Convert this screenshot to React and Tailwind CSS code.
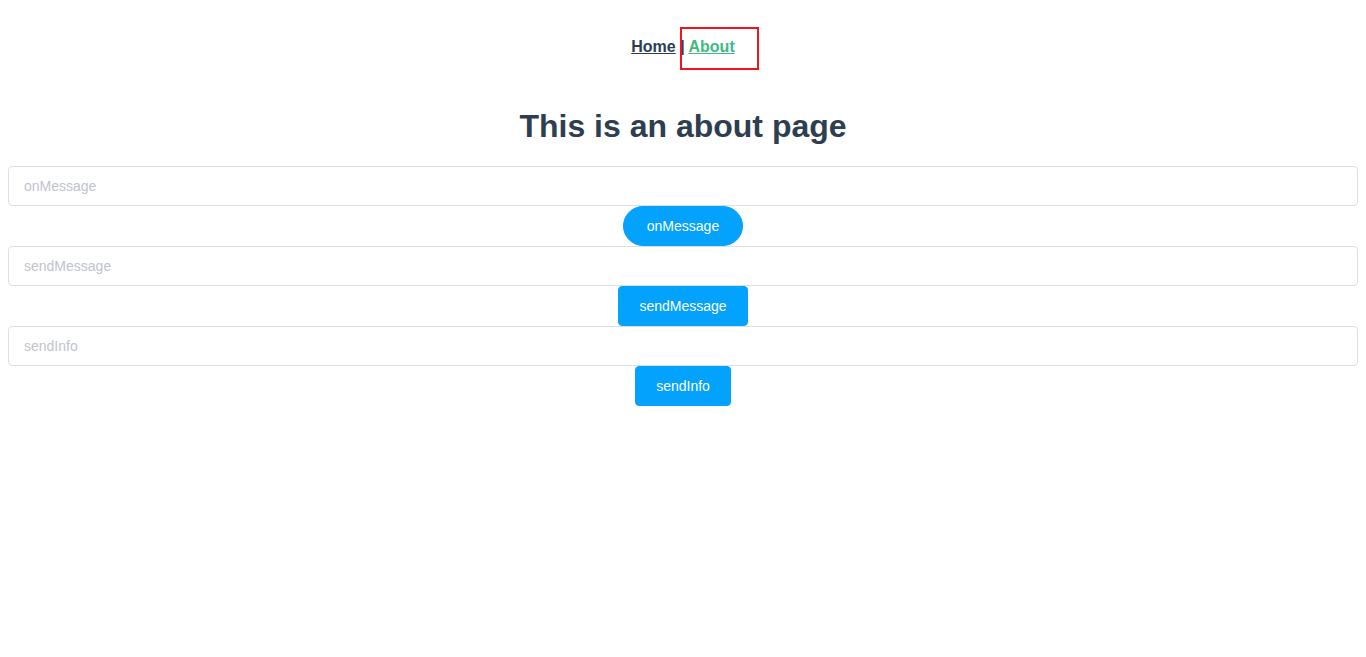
export default function App() {
  const rows = [
    { name: 'onMessage', round: true },
    { name: 'sendMessage', round: false },
    { name: 'sendInfo', round: false },
  ];

  return (
    <div className="min-h-[657px] bg-white px-2 pt-2 text-center text-[#2c3e50] font-['Liberation_Sans',Arial,sans-serif]">
      {/* Nav */}
      <div className="relative py-[30px] text-base leading-[18.4px]">
        <a className="font-bold text-[#2c3e50] underline">Home</a>
        <span className="font-bold"> | </span>
        <a className="font-bold text-[#42b983] underline">About</a>
        {/* red highlight box */}
        <div className="pointer-events-none absolute left-[672px] top-[19px] h-[43px] w-[79px] border-2 border-[#f0141e]"></div>
      </div>

      <h1 className="my-[21.44px] text-[32px] font-bold leading-[36.8px]">This is an about page</h1>

      {rows.map((r) => (
        <div key={r.name}>
          <input
            type="text"
            placeholder={r.name}
            className="block h-10 w-full rounded border border-[#dcdfe6] px-[15px] text-sm text-[#606266] outline-none placeholder:text-[#c0c4cc]"
          />
          <button
            className={`h-10 border border-[#03a2fd] bg-[#03a2fd] text-sm leading-none text-white ${
              r.round ? 'rounded-full px-[23px]' : 'rounded px-5'
            }`}
          >
            {r.name}
          </button>
        </div>
      ))}
    </div>
  );
}
